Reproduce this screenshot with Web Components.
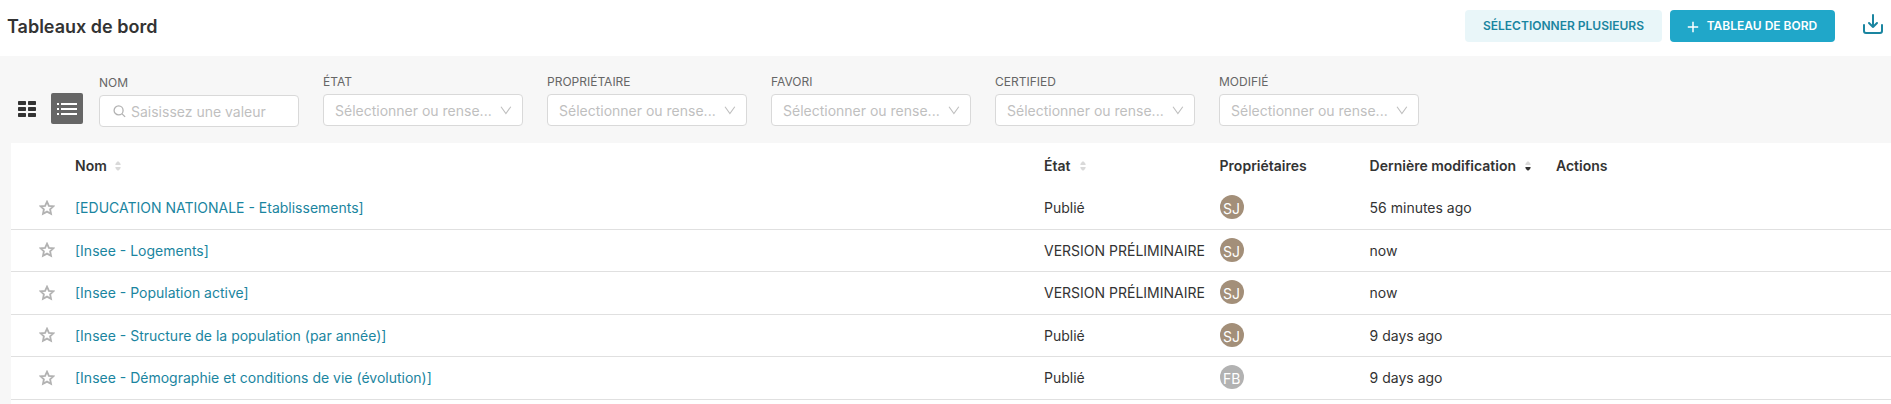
<!DOCTYPE html>
<html lang="fr">
<head>
<meta charset="utf-8">
<title>Tableaux de bord</title>
<style>
html,body{margin:0;height:100%;overflow:hidden}
body{background:#f7f7f7;font-family:Inter,"Liberation Sans",sans-serif;font-size:14px;color:#333}
</style>
</head>
<body>
<dashboard-page></dashboard-page>
<script>
const define = (name, render) => customElements.define(name, class extends HTMLElement {
  connectedCallback() {
    if (this.shadowRoot) return;
    this.attachShadow({ mode: 'open' }).innerHTML = render(this);
  }
});

define('action-button', el => `
<style>
:host{display:flex;align-items:center;justify-content:center;box-sizing:border-box;height:32px;width:197px;border-radius:4px;background:#e9f6f9;color:#1a85a0;font-size:12px;font-weight:600;line-height:17px;padding-bottom:1px;white-space:nowrap}
:host([primary]){background:#20a7c9;color:#fff;width:165px;padding-right:1px}
svg{margin:2px 8px 0 0}
</style>
${el.hasAttribute('primary') ? '<svg width="12" height="12" viewBox="0 0 12 12" fill="none" stroke="currentColor" stroke-width="1.5"><path d="M6 .8v10.4M.8 6h10.4"/></svg>' : ''}<slot></slot>`);

define('page-header', () => `
<style>
:host{display:flex;align-items:center;height:56px;background:#fff;box-sizing:border-box;padding:0 8px 4px 7px}
h1{margin:2px 0 0;flex:1;font-size:18px;line-height:24px;font-weight:600}
.import{margin:0 0 4px 28px;display:block}
action-button+action-button{margin-left:8px}
</style>
<h1>Tableaux de bord</h1>
<action-button>SÉLECTIONNER PLUSIEURS</action-button>
<action-button primary>TABLEAU DE BORD</action-button>
<svg class="import" width="20" height="20" viewBox="0 0 20 20" fill="none" stroke="#1a85a0" stroke-width="2" stroke-linecap="round" stroke-linejoin="round"><path d="M1 11v6q0 2 2 2h14q2 0 2-2v-6M10 1v12M6 9l4 4 4-4"/></svg>`);

define('view-toggle', () => `
<style>
:host{display:flex;align-items:center;width:65px;height:31px}
svg{display:block}
.grid{margin-top:1px}
.list{margin-left:15px;width:32px;height:31px;border-radius:2px;background:#666}
</style>
<svg class="grid" width="18" height="16" fill="#333"><rect width="8" height="4" rx=".7"/><rect x="10" width="8" height="4" rx=".7"/><rect y="6" width="8" height="4" rx=".7"/><rect x="10" y="6" width="8" height="4" rx=".7"/><rect y="12" width="8" height="4" rx=".7"/><rect x="10" y="12" width="8" height="4" rx=".7"/></svg>
<div class="list"><svg width="32" height="31" fill="#fff"><path d="M6 10h2v2H6zM10 10h16v2H10zM6 15h2v2H6zM10 15h16v2H10zM6 20h2v2H6zM10 20h16v2H10z"/></svg></div>`);

define('filter-field', el => {
  const search = el.hasAttribute('search');
  return `
<style>
:host{display:block;width:200px;flex:none}
:host([search]){margin-top:1px}
label{display:block;font-size:12px;line-height:17px;color:#666;height:21px}
.box{height:32px;box-sizing:border-box;border:1px solid #d9d9d9;border-radius:4px;background:#fff;display:flex;align-items:center;color:#bfbfbf;padding:2px 10px 0 11px}
span{flex:1;white-space:nowrap;line-height:22px}
svg{flex:none;display:block}
.glass{margin:-1px 5px 0 2px}
.arrow{margin:-1px 0 0 6px}
</style>
<label>${el.getAttribute('label')}</label>
<div class="box">${search ? '<svg class="glass" width="13" height="13" viewBox="0 0 13 13" fill="none" stroke="#b2b2b2" stroke-width="1.3"><circle cx="5.6" cy="5.4" r="4.5"/><path d="M8.8 8.6l3.3 3.3"/></svg>' : ''}<span>${search ? 'Saisissez une valeur' : 'Sélectionner ou rense...'}</span>${search ? '' : '<svg class="arrow" width="12" height="9" viewBox="0 0 12 9" fill="none" stroke="#bfbfbf" stroke-width="1.1"><path d="M1 .7l4.9 6.8L10.8.7"/></svg>'}</div>`;
});

define('filter-bar', () => `
<style>
:host{display:flex;gap:24px;height:87px;box-sizing:border-box;padding:17px 0 0 18px}
view-toggle{margin-top:20px;margin-right:-8px}
</style>
<view-toggle></view-toggle>
<filter-field search label="NOM"></filter-field>
${['ÉTAT','PROPRIÉTAIRE','FAVORI','CERTIFIED','MODIFIÉ'].map(l => `<filter-field label="${l}"></filter-field>`).join('')}`);

define('sort-icon', el => `
<style>:host{display:inline-block;margin-left:9px}svg{display:block}</style>
<svg width="6" height="10" viewBox="0 0 6 10"><path d="M.4 4Q.3 3 1 2.1L2.2.7q.8-.8 1.6 0L5 2.1Q5.7 3 5.6 4z" fill="#d9d9d9"/><path d="M.4 6Q.3 7 1 7.9L2.2 9.3q.8.6 1.6 0L5 7.9Q5.7 7 5.6 6z" fill="${el.hasAttribute('active') ? '#333' : '#d9d9d9'}"/></svg>`);

define('owner-avatar', () => `
<style>:host{display:flex;align-items:center;justify-content:center;box-sizing:border-box;width:24px;height:24px;border-radius:50%;background:var(--tone);color:#fff;font-size:14px;padding-top:4px;line-height:20px}</style><slot></slot>`);

define('dashboard-row', () => `
<style>
:host{display:grid;grid-template-columns:64px 969px 175.6px 150px 186.4px 1fr;height:42.5px;box-sizing:border-box;border-bottom:1px solid #e0e0e0;align-items:center;line-height:20px;padding-top:.7px}
.name{color:#1a85a0}
.star{display:block;margin:-1px 0 0 28px}
</style>
<svg class="star" width="16" height="16" viewBox="0 0 16 16" fill="none" stroke="#b2b2b2" stroke-width="1.8"><path d="M8 1.7l1.9 4.1 4.5.5-3.3 3 .9 4.5L8 11.6l-4 2.2.9-4.5-3.3-3 4.5-.5z"/></svg>
<span class="name"><slot name="name"></slot></span><slot name="state"></slot><slot name="owner"></slot><slot name="date"></slot>`);

define('dashboard-table', () => `
<style>
:host{display:block;margin-left:11px;background:#fff}
.head{display:grid;grid-template-columns:64px 969px 175.6px 150px 186.4px 1fr;height:44px;align-items:center;font-weight:600;line-height:20px;padding-top:2px;box-sizing:border-box}
.head div{display:flex;align-items:center}
sort-icon{margin-top:-1px}
.name sort-icon{margin-left:8px}
.state sort-icon{margin-left:10px}
owner-avatar{margin-top:-2px}
.next{height:10px}
</style>
<div class="head"><div></div><div class="name">Nom<sort-icon></sort-icon></div><div class="state">État<sort-icon></sort-icon></div><div>Propriétaires</div><div>Dernière modification<sort-icon active></sort-icon></div><div>Actions</div></div>
${[
['[EDUCATION NATIONALE - Etablissements]','Publié','SJ','56 minutes ago'],
['[Insee - Logements]','VERSION PRÉLIMINAIRE','SJ','now'],
['[Insee - Population active]','VERSION PRÉLIMINAIRE','SJ','now'],
['[Insee - Structure de la population (par année)]','Publié','SJ','9 days ago'],
['[Insee - Démographie et conditions de vie (évolution)]','Publié','FB','9 days ago']
].map(([n,s,o,d]) => `<dashboard-row><span slot="name">${n}</span><span slot="state">${s}</span><owner-avatar slot="owner" style="--tone:${o === 'SJ' ? '#a38f79' : '#b2b2b2'}">${o}</owner-avatar><span slot="date">${d}</span></dashboard-row>`).join('')}
<div class="next"></div>`);

define('dashboard-page', () => `
<style>:host{display:block}</style>
<page-header></page-header><filter-bar></filter-bar><dashboard-table></dashboard-table>`);
</script>
</body>
</html>
